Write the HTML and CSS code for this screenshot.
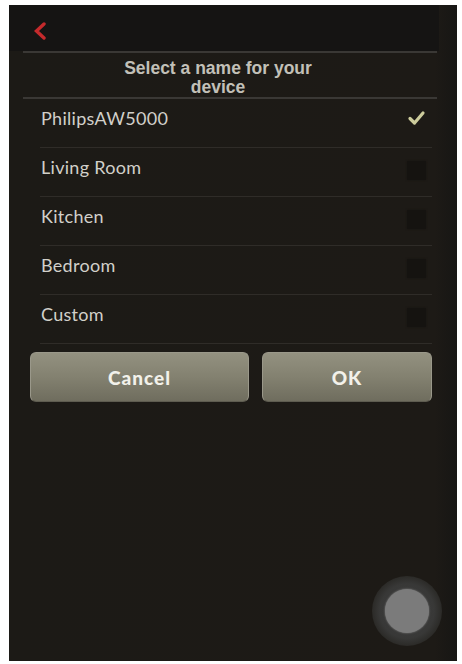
FILE: index.html
```html
<!DOCTYPE html>
<html>
<head>
<meta charset="utf-8">
<link rel="stylesheet" href="styles.css">
</head>
<body>
<div class="screen">
  <div class="header">
    <svg class="back" width="14" height="18" viewBox="0 0 14 18"><polyline points="11,2 3.5,9 11,16" fill="none" stroke="#c42a2c" stroke-width="3.4" stroke-linejoin="miter" stroke-linecap="round"/></svg>
  </div>
  <div class="rule"></div>
  <div class="title">Select a name for your<br>device</div>
  <div class="rule"></div>
  <div class="list">
    <div class="row">
      <span class="label">PhilipsAW5000</span>
      <svg class="check" width="20" height="16" viewBox="0 0 20 16"><polyline points="3,8.5 7.5,13 16,3" fill="none" stroke="#cdcc9c" stroke-width="3.2" stroke-linecap="round" stroke-linejoin="round"/></svg>
    </div>
    <div class="row"><span class="label">Living Room</span><span class="box"></span></div>
    <div class="row"><span class="label">Kitchen</span><span class="box"></span></div>
    <div class="row"><span class="label">Bedroom</span><span class="box"></span></div>
    <div class="row"><span class="label">Custom</span><span class="box"></span></div>
  </div>
  <div class="buttons">
    <div class="btn cancel">Cancel</div>
    <div class="btn ok">OK</div>
  </div>
  <div class="touch"><div class="touch-inner"></div></div>
</div>
</body>
</html>
```
FILE: styles.css
```css
html, body {
  margin: 0;
  padding: 0;
  background: #ffffff;
}
.screen {
  position: relative;
  margin: 5px 0 0 9px;
  width: 448px;
  height: 656px;
  background: linear-gradient(to right, #1c1a16 0%, #1d1a16 95%, #171614 100%);
  overflow: hidden;
}
.header {
  height: 46px;
  background: #151413;
  display: flex;
  align-items: flex-start;
  padding-left: 24px;
  margin-right: 18px;
}
.back {
  margin-top: 17px;
}
.rule {
  height: 2px;
  margin: 0 20px 0 14px;
  background: #3a3835;
}
.title {
  font-family: "Liberation Sans", Arial, sans-serif;
  font-weight: bold;
  font-size: 17.5px;
  line-height: 19px;
  color: #c2c0b8;
  text-align: center;
  padding: 6px 30px 0 0;
  box-sizing: border-box;
  height: 44px;
}
.list {
  margin: 0 25px 0 31px;
}
.row {
  height: 49px;
  box-sizing: border-box;
  border-bottom: 1px solid #2f2c28;
  display: flex;
  justify-content: space-between;
  align-items: flex-start;
  padding: 0 6px 0 1px;
}
.label {
  font-family: "Lato", "Open Sans", sans-serif;
  font-size: 18px;
  letter-spacing: 0.3px;
  line-height: 20px;
  color: #d2d0ca;
  padding-top: 9px;
}
.check {
  margin-top: 11px;
  margin-right: -1px;
}
.box {
  width: 19px;
  height: 19px;
  margin-top: 13px;
  background: #151310;
  border-radius: 1px;
  box-shadow: 0 0 2px #151310;
}
.buttons {
  display: flex;
  gap: 13px;
  margin: 8px 0 0 21px;
}
.btn {
  height: 50px;
  box-sizing: border-box;
  border-radius: 6px;
  background: linear-gradient(to bottom, #939180 0%, #838170 50%, #6f6d5e 100%);
  border: 1px solid #9a988a;
  border-bottom-color: #5e5c50;
  display: flex;
  align-items: center;
  justify-content: center;
  font-family: "Lato", "Open Sans", sans-serif;
  font-weight: 900;
  font-size: 19px;
  color: #f2f1ea;
  letter-spacing: 1px;
}
.cancel {
  width: 219px;
}
.ok {
  width: 170px;
}
.touch {
  position: absolute;
  left: 363px;
  top: 571px;
  width: 70px;
  height: 70px;
  border-radius: 50%;
  background: radial-gradient(circle, #3e3e3e 0%, #383837 55%, #2a2926 72%, rgba(28,26,22,0) 100%);
  display: flex;
  align-items: center;
  justify-content: center;
}
.touch-inner {
  width: 44px;
  height: 44px;
  border-radius: 50%;
  background: #7b7b7b;
  box-shadow: 0 0 2px #8a8a8a;
}
```
